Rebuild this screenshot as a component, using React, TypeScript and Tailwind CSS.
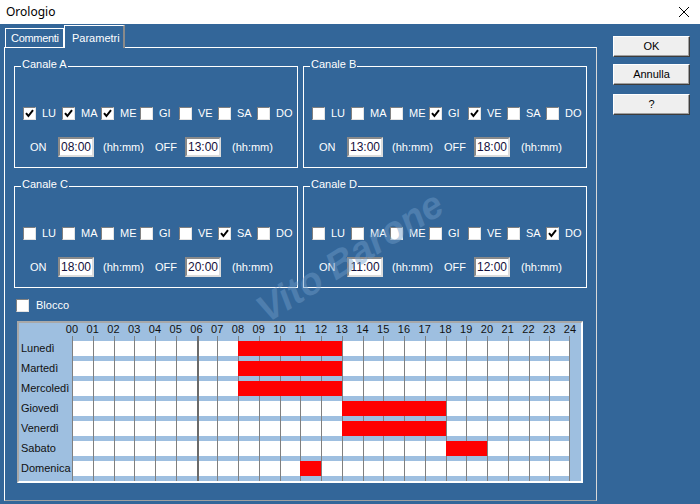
import React from "react";

type Channel = { name: string; checked: number[]; on: string; off: string };

const days = ["LU", "MA", "ME", "GI", "VE", "SA", "DO"];

const channels: Channel[] = [
  { name: "Canale A", checked: [0, 1, 2], on: "08:00", off: "13:00" },
  { name: "Canale B", checked: [3, 4], on: "13:00", off: "18:00" },
  { name: "Canale C", checked: [5], on: "18:00", off: "20:00" },
  { name: "Canale D", checked: [6], on: "11:00", off: "12:00" },
];

const week = [
  { day: "Lunedì", from: 8, to: 13 },
  { day: "Martedì", from: 8, to: 13 },
  { day: "Mercoledì", from: 8, to: 13 },
  { day: "Giovedì", from: 13, to: 18 },
  { day: "Venerdì", from: 13, to: 18 },
  { day: "Sabato", from: 18, to: 20 },
  { day: "Domenica", from: 11, to: 12 },
];

const hours = Array.from({ length: 24 }, (_, i) => i);

const CheckBox = ({ checked }: { checked?: boolean }) => (
  <span className="flex h-[13px] w-[13px] shrink-0 items-center justify-center border border-t-[#808080] border-l-[#808080] border-r-[#e3e3e3] border-b-[#e3e3e3] bg-white">
    {checked && (
      <svg width="9" height="9" viewBox="0 0 9 9">
        <path d="M1 4.2 L3.4 7 L8 1.2" fill="none" stroke="#000" strokeWidth="2" />
      </svg>
    )}
  </span>
);

const TimeBox = ({ value }: { value: string }) => (
  <span className="flex h-[20px] w-[36px] shrink-0 items-center justify-center border-2 border-t-[#8a8a8a] border-l-[#8a8a8a] border-r-[#dcdcdc] border-b-[#dcdcdc] bg-white text-[12px] text-[#14103c]">
    {value}
  </span>
);

const Group = ({ ch }: { ch: Channel }) => (
  <div className="relative h-[102px] w-[284px] border border-white">
    <span className="absolute left-[6px] top-[-9px] bg-[#336699] px-[1px] text-[11px] leading-[13px] text-white">
      {ch.name}
    </span>
    <div className="flex pl-[8px] pt-[40px]">
      {days.map((d, i) => (
        <div key={d} className="flex w-[39px] items-center gap-[6px]">
          <CheckBox checked={ch.checked.includes(i)} />
          <span className="text-[11px] leading-[13px] text-white">{d}</span>
        </div>
      ))}
    </div>
    <div className="mt-[17px] flex items-center pl-[15px] text-[11px] text-white">
      <span className="w-[28px]">ON</span>
      <TimeBox value={ch.on} />
      <span className="ml-[9px] w-[52px]">(hh:mm)</span>
      <span className="w-[30px]">OFF</span>
      <TimeBox value={ch.off} />
      <span className="ml-[11px]">(hh:mm)</span>
    </div>
  </div>
);

const LineStrip = () => (
  <div className="flex h-[5px]">
    <div className="w-[53px]" />
    <div className="grid w-[498px] grid-cols-24">
      {hours.map((h) => (
        <div
          key={h}
          className={`${h === 6 ? "border-l-2 border-[#6a6a6a]" : "border-l border-[#808080]"} ${h === 23 ? "border-r border-r-[#808080]" : ""}`}
        />
      ))}
    </div>
  </div>
);

const Schedule = () => (
  <div className="ml-[3px] mt-[9px] h-[162px] w-[566px] border-2 border-t-[#a8a8a8] border-l-[#a8a8a8] border-r-white border-b-white bg-[#9ebfe0] text-[11px] text-[#111]">
    <div className="flex h-[13px] items-center">
      <div className="ml-[42.6px] flex">
        {Array.from({ length: 25 }, (_, i) => (
          <span key={i} className="w-[20.75px] text-center leading-none">
            {String(i).padStart(2, "0")}
          </span>
        ))}
      </div>
    </div>
    <LineStrip />
    {week.map((w) => (
      <React.Fragment key={w.day}>
        <div className="flex h-[15px]">
          <div className="flex w-[53px] items-center pl-[2px] leading-none">{w.day}</div>
          <div className="grid w-[498px] grid-cols-24 bg-white">
            {hours.map((h) => {
              const on = h >= w.from && h < w.to;
              return (
                <div
                  key={h}
                  className={`${on ? "border-l border-l-transparent bg-[#ff0000]" : h === 6 ? "border-l-2 border-[#6a6a6a]" : "border-l border-[#808080]"} ${h === 23 ? "border-r border-r-[#808080]" : ""}`}
                />
              );
            })}
          </div>
        </div>
        <LineStrip />
      </React.Fragment>
    ))}
  </div>
);

const Btn = ({ label, className }: { label: string; className?: string }) => (
  <div
    className={`flex h-[21px] w-[77px] items-center justify-center border border-t-white border-l-white border-r-[#3c3c3c] border-b-[#3c3c3c] bg-[#efefef] text-[11px] text-black shadow-[inset_-1px_-1px_0_#a0a0a0] ${className ?? ""}`}
  >
    {label}
  </div>
);

export default function App() {
  return (
    <div
      className="flex h-[504px] w-[700px] flex-col overflow-hidden bg-[#336699]"
      style={{ fontFamily: '"Liberation Sans", Arial, sans-serif' }}
    >
      {/* title bar */}
      <div className="flex h-[24px] shrink-0 items-center justify-between bg-white pl-[6px] pr-[10px]">
        <span className="text-[12px] text-black" style={{ fontFamily: '"Noto Sans", sans-serif' }}>
          Orologio
        </span>
        <svg width="12" height="12" viewBox="0 0 12 12">
          <path d="M1 1 L11 11 M11 1 L1 11" stroke="#000" strokeWidth="1" />
        </svg>
      </div>

      <div className="flex flex-1">
        {/* tab control */}
        <div className="flex w-[597px] flex-col pl-[4px]">
          <div className="flex h-[23px] items-end pl-[1px] text-[11px] text-white">
            <div className="flex h-[19px] w-[59px] items-center border-t border-l border-r border-white pl-[5px] tracking-[-0.3px]">
              Commenti
            </div>
            <div className="relative z-10 -mb-[1px] flex h-[23px] w-[61px] items-center border-t border-l border-white border-r-2 border-r-[#8a8a8a] bg-[#336699] pl-[7px] pt-[2px]">
              Parametri
            </div>
          </div>
          <div className="relative h-[454px] border-t border-l border-white border-r border-b border-r-[#d8d8d8] border-b-[#a0a0a0] pl-[9px] pt-[18px]">
            <div className="grid grid-cols-[284px_284px] gap-x-[5px] gap-y-[18px]">
              {channels.map((c) => (
                <Group key={c.name} ch={c} />
              ))}
            </div>

            <div className="ml-[2px] mt-[11px] flex items-center gap-[7px] text-[11px] text-white">
              <CheckBox />
              <span className="leading-[13px]">Blocco</span>
            </div>

            <Schedule />

            <span className="pointer-events-none absolute left-[345px] top-[209px] -translate-x-1/2 -translate-y-1/2 -rotate-[32deg] whitespace-nowrap text-[38px] font-bold italic text-[#6f9cc8] opacity-45">
              Vito Barone
            </span>
          </div>
        </div>

        {/* buttons */}
        <div className="flex flex-col pl-[16px] pt-[12px]">
          <Btn label="OK" />
          <Btn label="Annulla" className="mt-[7px]" />
          <Btn label="?" className="mt-[9px]" />
        </div>
      </div>
    </div>
  );
}
